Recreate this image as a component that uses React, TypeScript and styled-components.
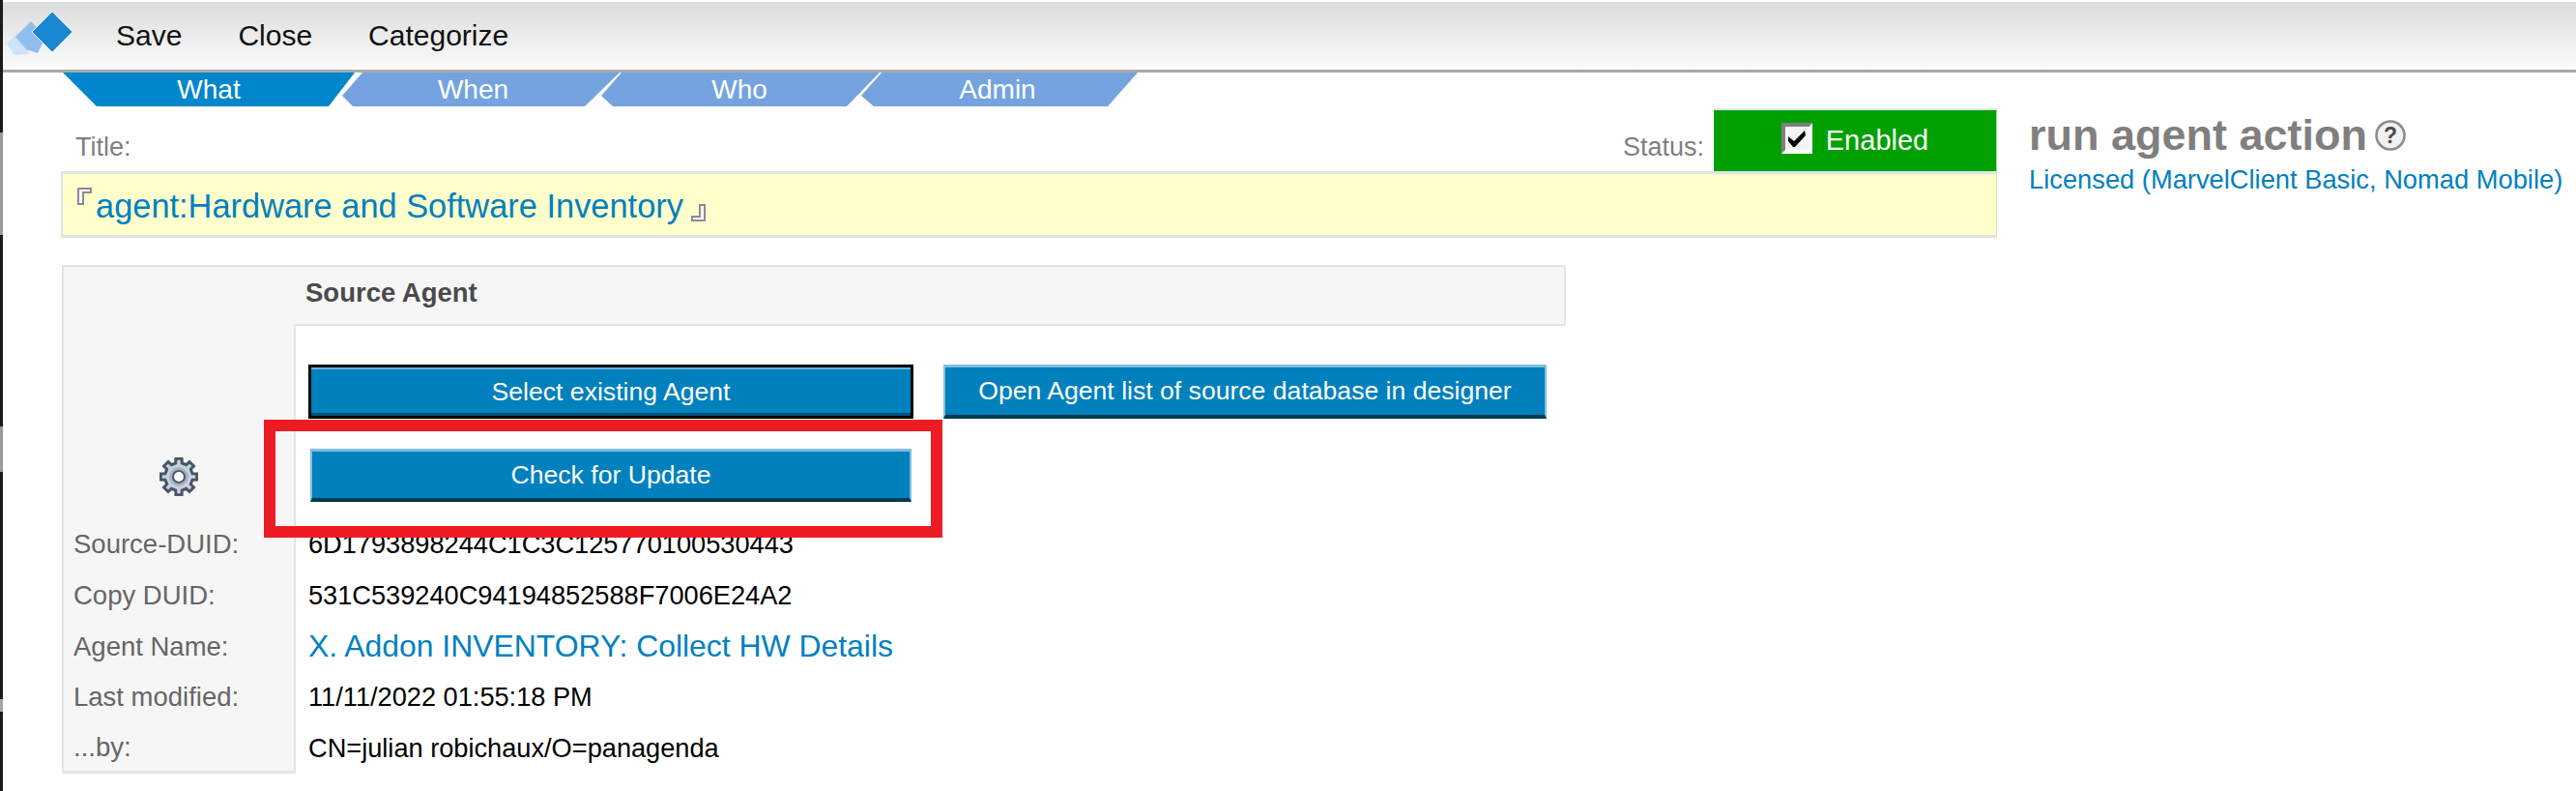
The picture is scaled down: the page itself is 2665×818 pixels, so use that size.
import React from "react";
import styled, { createGlobalStyle } from "styled-components";

const GlobalStyle = createGlobalStyle`
  html, body {
    margin: 0;
    padding: 0;
    background: #ffffff;
  }
  * {
    box-sizing: border-box;
  }
`;

const Page = styled.div`
  position: relative;
  width: 2665px;
  height: 818px;
  overflow: hidden;
  border-left: 3px solid #1a1a1a;
  border-image: linear-gradient(
      to bottom,
      #1a1a1a 0 138px,
      #9a9a9a 138px 243px,
      #1a1a1a 243px 441px,
      #9a9a9a 441px 488px,
      #1a1a1a 488px 722px,
      #a5a5a5 722px 735px,
      #1a1a1a 735px
    )
    1;
  background: #ffffff;
  font-family: "Liberation Sans", Arial, sans-serif;
`;

const Toolbar = styled.div`
  height: 73px;
  margin-top: 2px;
  display: flex;
  align-items: center;
  gap: 58px;
  background: linear-gradient(#dcdcdc, #fbfbfb);
  border-bottom: 3px solid #a9a9a9;
`;

const LogoWrap = styled.div`
  width: 117px;
  height: 70px;
  margin-right: -58px;
  flex-shrink: 0;
`;

const ToolbarItem = styled.span`
  font-size: 30px;
  color: #111111;
`;

const TabRow = styled.div`
  height: 35px;
  display: flex;
  padding-left: 62px;
`;

const TabItem = styled.div<{ $width: number; $overlap: number; $shape: string; $active?: boolean; $nudge: number }>`
  width: ${(p) => p.$width}px;
  margin-left: ${(p) => p.$overlap}px;
  clip-path: polygon(${(p) => p.$shape});
  background: ${(p) => (p.$active ? "#0086cc" : "#74a3e0")};
  color: #ffffff;
  font-size: 28px;
  line-height: 35px;
  text-align: center;
  padding-right: ${(p) => p.$nudge}px;
`;

const TopArea = styled.div`
  display: flex;
  gap: 33px;
  padding-left: 60px;
  margin-top: 2px;
`;

const FormColumn = styled.div`
  width: 2003px;
  flex-shrink: 0;
`;

const FieldHead = styled.div`
  height: 65px;
  display: flex;
  justify-content: space-between;
`;

const FieldLabel = styled.span`
  font-size: 27px;
  color: #808080;
  align-self: flex-end;
  padding-bottom: 9px;
`;

const TitleLabel = styled(FieldLabel)`
  margin-left: 15px;
`;

const StatusGroup = styled.div`
  display: flex;
  gap: 10px;
`;

const StatusBox = styled.div`
  width: 293px;
  height: 65px;
  display: flex;
  align-items: center;
  justify-content: center;
  gap: 14px;
  background: #00a000;
  border-top: 2px solid #e4e4e4;
  border-right: 1px solid #9fd29f;
  color: #ffffff;
  font-size: 29px;
`;

const CheckBox = styled.span`
  width: 32px;
  height: 32px;
  display: flex;
  align-items: center;
  justify-content: center;
  background: #f4f4f4;
  border-style: solid;
  border-width: 4px 3px 4px 4px;
  border-color: #808080 #ffffff #ffffff #808080;
  position: relative;
  top: -3px;
`;

const TitleBox = styled.div`
  height: 69px;
  display: flex;
  align-items: center;
  padding-left: 15px;
  background: #ffffcc;
  border-style: solid;
  border-width: 3px 1px 3px 2px;
  border-color: #e3e3e3 #e0e0c0 #e3e3e3 #e3e3e3;
`;

const TitleText = styled.span`
  font-size: 34.4px;
  color: #0080c0;
  margin: 3px 8px 0 4px;
`;

const MarkStart = styled.svg`
  align-self: flex-start;
  margin-top: 14px;
`;

const MarkEnd = styled.svg`
  align-self: flex-end;
  margin-bottom: 14px;
`;

const InfoColumn = styled.div`
  display: flex;
  flex-direction: column;
  padding-top: 2px;
`;

const InfoHeading = styled.div`
  display: flex;
  align-items: center;
  gap: 8px;
  font-size: 45px;
  font-weight: bold;
  color: #7f7f7f;
  line-height: 52px;
`;

const LicenseText = styled.div`
  font-size: 27.3px;
  color: #0080c0;
  margin-top: 4px;
`;

const Panel = styled.div`
  width: 1556px;
  margin: 28px 0 0 61px;
  display: grid;
  grid-template-columns: 240px 1fr;
  grid-template-rows: 61px 202px repeat(5, 52.7px);
`;

const SideCell = styled.div`
  background: #f6f6f6;
  border-left: 2px solid #e4e4e4;
  display: flex;
  align-items: center;
  padding-left: 10px;
  font-size: 27.5px;
  color: #666666;
`;

const CornerCell = styled(SideCell)`
  border-top: 2px solid #e4e4e4;
`;

const GearCell = styled(SideCell)`
  justify-content: center;
  padding: 113px 0 0;
`;

const LastSideCell = styled(SideCell)`
  border-bottom: 3px solid #e4e4e4;
`;

const PanelHeader = styled.div`
  background: #f6f6f6;
  border-top: 2px solid #e4e4e4;
  border-right: 2px solid #e4e4e4;
  display: flex;
  align-items: center;
  padding: 0 0 5px 12px;
  font-size: 27.5px;
  font-weight: bold;
  color: #4a4a4a;
`;

const ButtonCell = styled.div`
  border-top: 2px solid #e4e4e4;
  border-left: 2px solid #e4e4e4;
  padding: 40px 0 0 13px;
  display: grid;
  grid-template-columns: 626px 624px;
  grid-template-rows: 56px 55px;
  column-gap: 31px;
  row-gap: 31px;
`;

const ActionButton = styled.button<{ $focused?: boolean; $inset?: number }>`
  margin: 0;
  margin-left: ${(p) => p.$inset ?? 0}px;
  width: calc(100% - ${(p) => (p.$inset ?? 0) * 2}px);
  height: 100%;
  padding: 0;
  background: #0080bd;
  color: #ffffff;
  font-family: inherit;
  font-size: 26.6px;
  border-style: solid;
  border-width: ${(p) => (p.$focused ? "3px" : "3px 2px 4px")};
  border-color: ${(p) => (p.$focused ? "#000000" : "#7fbfde #7fbfde #00384f")};
  box-shadow: ${(p) => (p.$focused ? "inset 0 2px 0 #6db5d8, inset 0 -3px 0 #00557d" : "none")};
`;

const ValueCell = styled.div<{ $link?: boolean }>`
  display: flex;
  align-items: center;
  padding-left: 13px;
  border-left: 2px solid #e4e4e4;
  font-size: ${(p) => (p.$link ? "31.9px" : "27.2px")};
  color: ${(p) => (p.$link ? "#0080c0" : "#000000")};
`;

const Highlight = styled.div`
  position: absolute;
  left: 270px;
  top: 434px;
  width: 702px;
  height: 122px;
  border: 12px solid #ed1c24;
`;

const tabs = [
  { label: "What", width: 302, overlap: 0, nudge: 0, active: true, shape: "0 0, 302px 0, 275px 35px, 35px 35px" },
  { label: "When", width: 287, overlap: -13, nudge: 16, shape: "21px 0, 287px 0, 251px 35px, 11px 35px, 0 24px" },
  { label: "Who", width: 288, overlap: -19, nudge: 2, shape: "21px 0, 288px 0, 254px 35px, 12px 35px, 0 24px" },
  { label: "Admin", width: 286, overlap: -19, nudge: 4, shape: "21px 0, 286px 0, 255px 35px, 13px 35px, 0 24px" },
];

const details = [
  { label: "Source-DUID:", value: "6D1793898244C1C3C125770100530443" },
  { label: "Copy DUID:", value: "531C539240C94194852588F7006E24A2" },
  { label: "Agent Name:", value: "X. Addon INVENTORY: Collect HW Details", link: true },
  { label: "Last modified:", value: "11/11/2022 01:55:18 PM" },
  { label: "...by:", value: "CN=julian robichaux/O=panagenda" },
];

const gearPoints = (() => {
  const pts: string[] = [];
  const teeth = 8;
  for (let i = 0; i < teeth; i++) {
    const a = (i / teeth) * Math.PI * 2;
    const step = Math.PI / teeth;
    [
      [a - step * 0.42, 19],
      [a + step * 0.42, 19],
      [a + step * 0.58, 14.5],
      [a + step * 1.42, 14.5],
    ].forEach(([ang, r]) => {
      pts.push(`${(20 + r * Math.sin(ang)).toFixed(1)},${(20 - r * Math.cos(ang)).toFixed(1)}`);
    });
  }
  return pts.join(" ");
})();

const Logo = () => (
  <svg width="117" height="70" viewBox="0 0 117 70">
    <polygon points="4,43 15,32 27,44 26,54 12,55" fill="#cfe3f8" />
    <polygon points="13,36 29,20 44,36 36,53 24,49" fill="#8fbdee" />
    <polygon points="51,10 72,31 51,52 30,31" fill="#1a87d2" stroke="#e8f1f9" strokeWidth="1" />
  </svg>
);

const Gear = () => (
  <svg width="40" height="40" viewBox="0 0 40 40">
    <polygon points={gearPoints} fill="#c9d1d8" stroke="#46566a" strokeWidth="3" />
    <circle cx="20" cy="20" r="10" fill="#a9b4be" />
    <circle cx="20" cy="20" r="6" fill="#ffffff" stroke="#4f5f70" strokeWidth="2.2" />
  </svg>
);

const Help = () => (
  <svg width="32" height="32" viewBox="0 0 32 32">
    <circle cx="16" cy="16" r="14.5" fill="#f1f1f1" stroke="#8c8c8c" strokeWidth="2.6" />
    <text x="16" y="24" textAnchor="middle" fontSize="23" fontWeight="bold" fontFamily="Liberation Sans" fill="#4a4a4a">
      ?
    </text>
  </svg>
);

const App: React.FC = () => {
  return (
    <Page>
      <GlobalStyle />
      <Toolbar>
        <LogoWrap>
          <Logo />
        </LogoWrap>
        <ToolbarItem>Save</ToolbarItem>
        <ToolbarItem>Close</ToolbarItem>
        <ToolbarItem>Categorize</ToolbarItem>
      </Toolbar>
      <TabRow>
        {tabs.map((tab) => (
          <TabItem
            key={tab.label}
            $width={tab.width}
            $overlap={tab.overlap}
            $shape={tab.shape}
            $active={tab.active}
            $nudge={tab.nudge}
          >
            {tab.label}
          </TabItem>
        ))}
      </TabRow>
      <TopArea>
        <FormColumn>
          <FieldHead>
            <TitleLabel>Title:</TitleLabel>
            <StatusGroup>
              <FieldLabel>Status:</FieldLabel>
              <StatusBox>
                <CheckBox>
                  <svg width="22" height="22" viewBox="0 0 22 22">
                    <path d="M2 9 L8 14 L19 3 L20 8 L9 20 L7 20 L2 14 Z" fill="#000000" />
                  </svg>
                </CheckBox>
                Enabled
              </StatusBox>
            </StatusGroup>
          </FieldHead>
          <TitleBox>
            <MarkStart width="15" height="18" viewBox="0 0 15 18">
              <path d="M1 1 H14 V5 H6 V17 H1 Z" fill="#ffffff" stroke="#8a8a94" strokeWidth="2" />
            </MarkStart>
            <TitleText>agent:Hardware and Software Inventory</TitleText>
            <MarkEnd width="15" height="18" viewBox="0 0 15 18">
              <path d="M14 17 H1 V13 H9 V1 H14 Z" fill="#ffffff" stroke="#8a8a94" strokeWidth="2" />
            </MarkEnd>
          </TitleBox>
        </FormColumn>
        <InfoColumn>
          <InfoHeading>
            run agent action
            <Help />
          </InfoHeading>
          <LicenseText>Licensed (MarvelClient Basic, Nomad Mobile)</LicenseText>
        </InfoColumn>
      </TopArea>
      <Panel>
        <CornerCell />
        <PanelHeader>Source Agent</PanelHeader>
        <GearCell>
          <Gear />
        </GearCell>
        <ButtonCell>
          <ActionButton $focused>Select existing Agent</ActionButton>
          <ActionButton>Open Agent list of source database in designer</ActionButton>
          <ActionButton $inset={2}>Check for Update</ActionButton>
        </ButtonCell>
        {details.map((row, i) => {
          const Label = i === details.length - 1 ? LastSideCell : SideCell;
          return (
            <React.Fragment key={row.label}>
              <Label>{row.label}</Label>
              <ValueCell $link={row.link}>{row.value}</ValueCell>
            </React.Fragment>
          );
        })}
      </Panel>
      <Highlight />
    </Page>
  );
};

export default App;
